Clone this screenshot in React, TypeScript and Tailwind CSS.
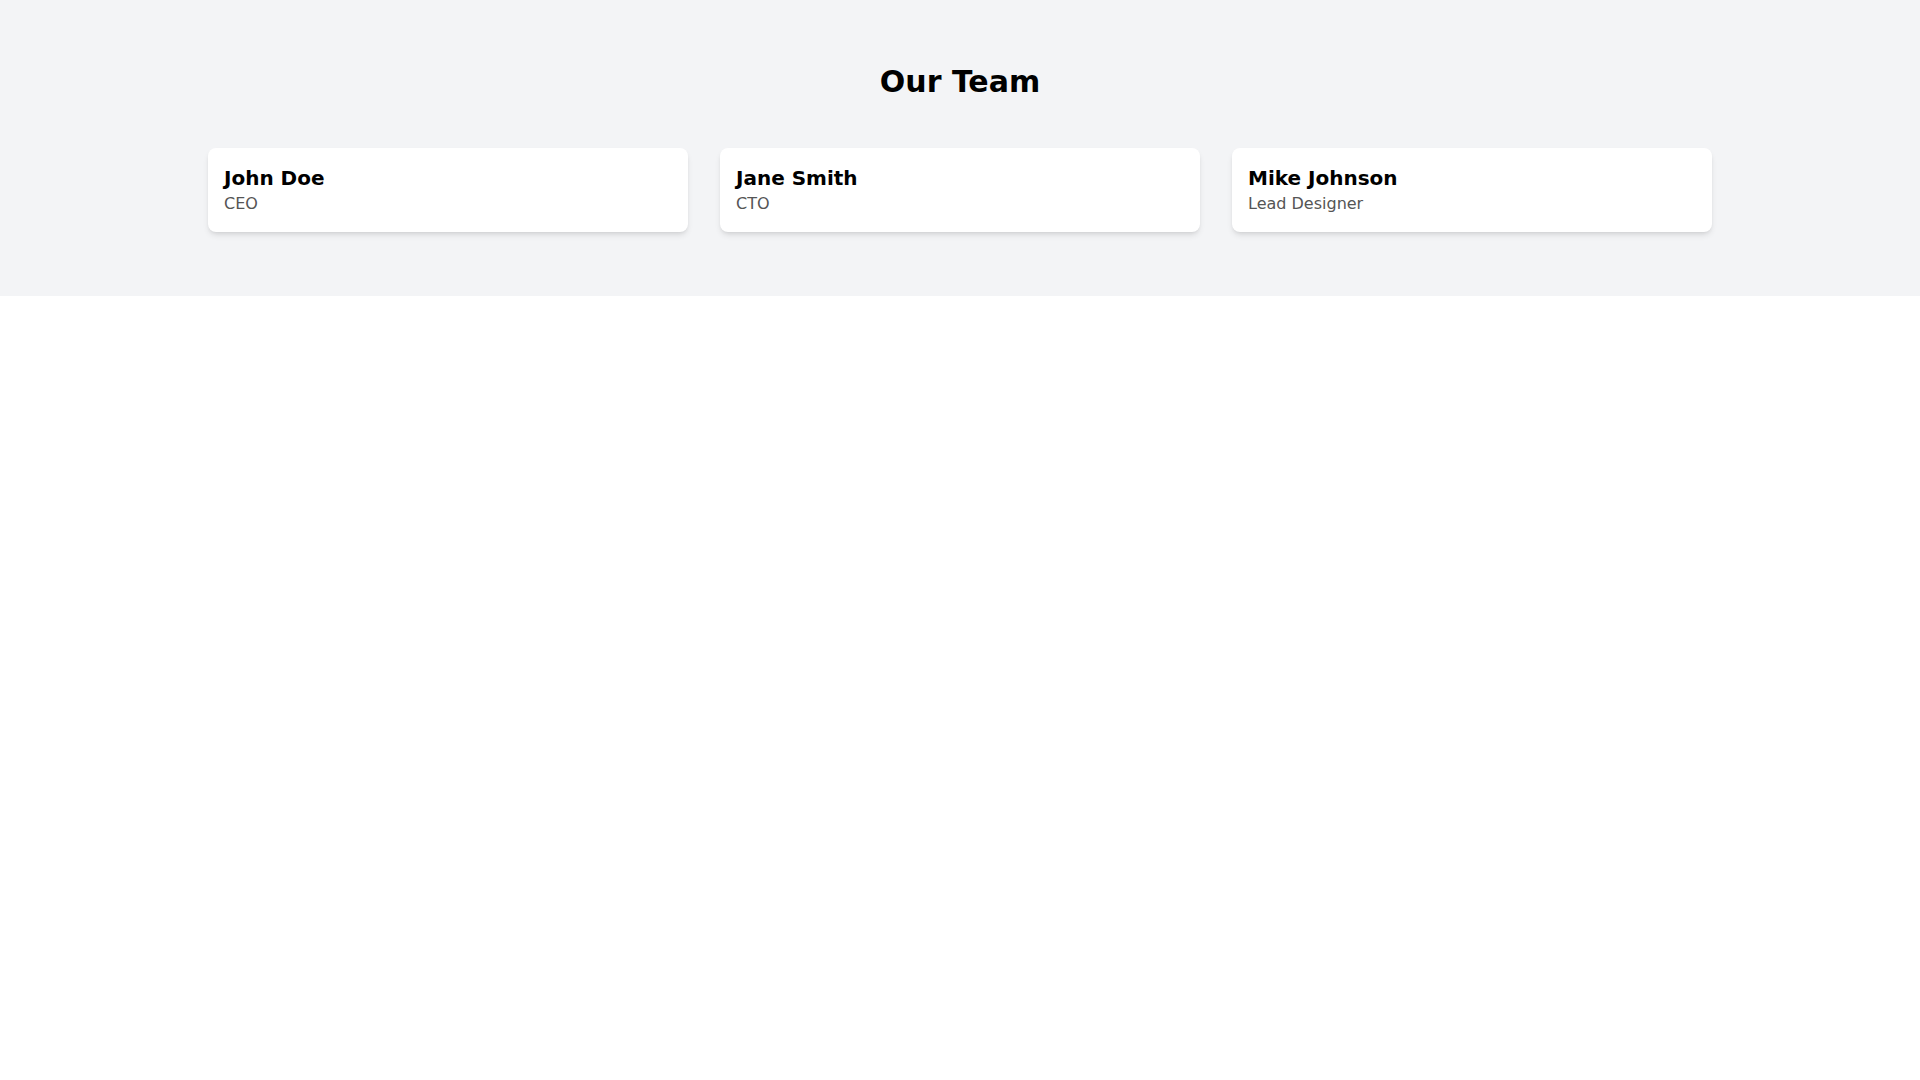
const team = [
  { name: 'John Doe', role: 'CEO' },
  { name: 'Jane Smith', role: 'CTO' },
  { name: 'Mike Johnson', role: 'Lead Designer' },
];

export default function App() {
  return (
    <div className="min-h-screen bg-white font-['DejaVu_Sans',sans-serif]">
      <section className="bg-gray-100 py-16">
        <div className="container mx-auto px-4">
          <h2 className="text-3xl font-bold text-center mb-12 text-black">Our Team</h2>
          <div className="grid grid-cols-3 gap-8">
            {team.map((m) => (
              <div key={m.name} className="bg-white rounded-lg shadow-md p-4">
                <h3 className="text-xl font-bold text-black">{m.name}</h3>
                <p className="text-[#555555]">{m.role}</p>
              </div>
            ))}
          </div>
        </div>
      </section>
    </div>
  );
}
